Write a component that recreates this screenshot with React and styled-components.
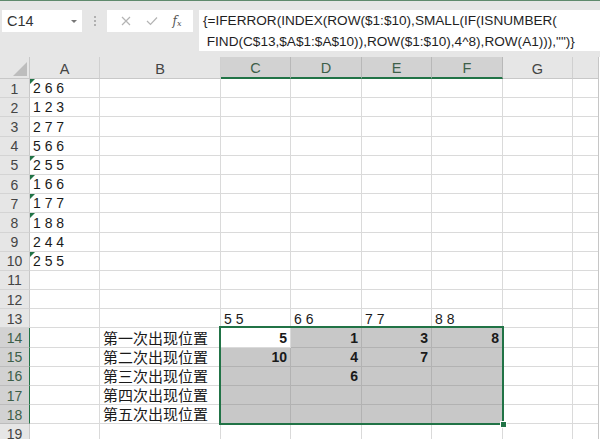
import React from 'react';
import styled, { createGlobalStyle } from 'styled-components';

const Global = createGlobalStyle`
  html, body { margin: 0; padding: 0; background: #fff; }
  body { width: 600px; height: 439px; overflow: hidden; font-family: "Liberation Sans", Arial, sans-serif; }
`;

const Frame = styled.div`
  width: 600px;
  height: 439px;
  display: flex;
  flex-direction: column;
  overflow: hidden;
`;

const FormulaArea = styled.div`
  height: 57px;
  box-sizing: border-box;
  background: #e6e6e6;
  border-top: 1px solid #5f8a6d;
  display: flex;
  align-items: flex-start;
  padding: 9px 0 0 2px;
  flex-shrink: 0;
`;

const NameBox = styled.div`
  width: 80px;
  height: 22px;
  box-sizing: border-box;
  background: #fff;
  display: flex;
  align-items: center;
  justify-content: space-between;
  padding: 0 5px 0 5px;
  font-size: 14.5px;
  color: #333;
`;

const Caret = styled.span`
  width: 0;
  height: 0;
  border-left: 3px solid transparent;
  border-right: 3px solid transparent;
  border-top: 3px solid #777;
`;

const Dots = styled.div`
  width: 25px;
  height: 22px;
  display: flex;
  flex-direction: column;
  align-items: center;
  justify-content: center;
  gap: 2px;
  & > i { width: 2px; height: 2px; background: #b0b0b0; display: block; }
`;

const FxBox = styled.div`
  width: 86px;
  height: 22px;
  box-sizing: border-box;
  background: #fff;
  display: flex;
  align-items: center;
  justify-content: space-around;
  padding: 0 4px 0 6px;
  color: #a8a8a8;
`;

const FxLabel = styled.span`
  font-family: "DejaVu Serif", "Liberation Serif", serif;
  font-style: italic;
  font-size: 12px;
  color: #555;
  & sub { font-size: 8px; vertical-align: -1px; }
`;

const FormulaBox = styled.div`
  margin-left: 6px;
  flex: 1;
  height: 41px;
  background: #fff;
  padding: 0 0 0 4px;
  font-size: 13.6px;
  line-height: 21px;
  color: #1f1f1f;
  white-space: pre;
  overflow: hidden;
  & > span { display: block; }
`;

const Sheet = styled.div`
  flex: 1;
  width: 598px;
  display: grid;
  grid-template-columns: 30px 70px 121px 70px 71px 70px 71px 70px 70px;
  grid-template-rows: 22px repeat(19, 19.2px);
  overflow: hidden;
  border-right: 1px solid #c6c6c6;
`;

const Corner = styled.div`
  grid-row: 1;
  grid-column: 1;
  background: #e6e6e6;
  border-right: 1px solid #c8c8c8;
  border-bottom: 1px solid #c8c8c8;
  display: flex;
  align-items: flex-end;
  justify-content: flex-end;
  padding: 0 2px 2px 0;
`;

const ColHeader = styled.div`
  grid-row: 1;
  grid-column: ${p => p.$col};
  background: ${p => (p.$sel ? '#d2d2d2' : '#e6e6e6')};
  border-right: 1px solid ${p => (p.$sel ? '#b8b8b8' : '#d0d0d0')};
  border-bottom: ${p => (p.$sel ? '2px solid #217346' : '1px solid #c8c8c8')};
  color: ${p => (p.$sel ? '#3d5f49' : '#444')};
  font-size: 14.5px;
  display: flex;
  align-items: center;
  justify-content: center;
  padding-top: 2px;
`;

const RowHeader = styled.div`
  grid-row: ${p => p.$row};
  grid-column: 1;
  background: ${p => (p.$sel ? '#d2d2d2' : '#e6e6e6')};
  border-right: ${p => (p.$sel ? '1px solid #217346' : '1px solid #c8c8c8')};
  border-bottom: 1px solid ${p => (p.$sel ? '#bcbcbc' : '#d4d4d4')};
  color: ${p => (p.$sel ? '#3d5f49' : '#444')};
  font-size: 14px;
  display: flex;
  align-items: center;
  justify-content: center;
  padding-top: 1px;
`;

const Cell = styled.div`
  grid-row: ${p => p.$row};
  grid-column: ${p => p.$col};
  position: relative;
  background: ${p => (p.$fill ? '#c8c8c8' : '#fff')};
  border-right: 1px solid ${p => (p.$fill ? '#b2b2b2' : '#dadada')};
  border-bottom: 1px solid ${p => (p.$fill ? '#b2b2b2' : '#dadada')};
  display: flex;
  align-items: flex-end;
  justify-content: ${p => (p.$right ? 'flex-end' : 'flex-start')};
  padding: 0 3px 0 3px;
  font-size: ${p => (p.$cjk ? '15px' : '14px')};
  font-family: ${p => (p.$cjk ? '"Noto Sans CJK SC", "Liberation Sans", sans-serif' : '"Liberation Sans", Arial, sans-serif')};
  font-weight: ${p => (p.$bold ? 700 : 400)};
  line-height: ${p => (p.$low ? '16px' : '18px')};
  color: #1a1a1a;
  white-space: pre;
  min-width: 0;
  &::before {
    content: '';
    display: ${p => (p.$tri ? 'block' : 'none')};
    position: absolute;
    left: 0;
    top: 0;
    border-top: 5px solid #217346;
    border-right: 5px solid transparent;
  }
`;

const Selection = styled.div`
  grid-column: 4 / 8;
  grid-row: 15 / 20;
  margin: -2px -1px -1px -2px;
  border: 2px solid #217346;
  position: relative;
  pointer-events: none;
  &::after {
    content: '';
    position: absolute;
    right: -5px;
    bottom: -5px;
    width: 5px;
    height: 5px;
    background: #217346;
    border: 1px solid #fff;
  }
`;

const cols = ['A', 'B', 'C', 'D', 'E', 'F', 'G', 'H'];
const selCols = ['C', 'D', 'E', 'F'];

const data = {
  A1: { v: '2 6 6', tri: true },
  A2: { v: '1 2 3' },
  A3: { v: '2 7 7' },
  A4: { v: '5 6 6' },
  A5: { v: '2 5 5', tri: true },
  A6: { v: '1 6 6', tri: true },
  A7: { v: '1 7 7', tri: true },
  A8: { v: '1 8 8', tri: true },
  A9: { v: '2 4 4' },
  A10: { v: '2 5 5', tri: true },
  C13: { v: '5 5', low: true },
  D13: { v: '6 6', low: true },
  E13: { v: '7 7', low: true },
  F13: { v: '8 8', low: true },
  B14: { v: '第一次出现位置', cjk: true },
  B15: { v: '第二次出现位置', cjk: true },
  B16: { v: '第三次出现位置', cjk: true },
  B17: { v: '第四次出现位置', cjk: true },
  B18: { v: '第五次出现位置', cjk: true },
  C14: { v: '5', num: true },
  D14: { v: '1', num: true },
  E14: { v: '3', num: true },
  F14: { v: '8', num: true },
  C15: { v: '10', num: true },
  D15: { v: '4', num: true },
  E15: { v: '7', num: true },
  D16: { v: '6', num: true },
};

export default function App() {
  const rows = Array.from({ length: 19 }, (_, i) => i + 1);
  return (
    <Frame>
      <Global />
      <FormulaArea>
        <NameBox>
          <span>C14</span>
          <Caret />
        </NameBox>
        <Dots><i /><i /><i /></Dots>
        <FxBox>
          <svg width="10" height="10" viewBox="0 0 10 10">
            <path d="M1 1 L9 9 M9 1 L1 9" stroke="#b4b4b4" strokeWidth="1.2" fill="none" />
          </svg>
          <svg width="12" height="10" viewBox="0 0 12 10">
            <path d="M1 5 L4.5 8.5 L11 1.5" stroke="#b4b4b4" strokeWidth="1.2" fill="none" />
          </svg>
          <FxLabel>f<sub>x</sub></FxLabel>
        </FxBox>
        <FormulaBox>
          <span>{'{=IFERROR(INDEX(ROW($1:$10),SMALL(IF(ISNUMBER('}</span>
          <span>{' FIND(C$13,$A$1:$A$10)),ROW($1:$10),4^8),ROW(A1))),"")}'}</span>
        </FormulaBox>
      </FormulaArea>
      <Sheet>
        <Corner>
          <svg width="14" height="14" viewBox="0 0 14 14">
            <path d="M14 0 L14 14 L0 14 Z" fill="#bdbdbd" />
          </svg>
        </Corner>
        {cols.map((c, ci) => (
          <ColHeader key={c} $col={ci + 2} $sel={selCols.includes(c)}>
            {c === 'H' ? '' : c}
          </ColHeader>
        ))}
        {rows.map(r => (
          <React.Fragment key={r}>
            <RowHeader $row={r + 1} $sel={r >= 14 && r <= 18}>{r}</RowHeader>
            {cols.map((c, ci) => {
              const id = c + r;
              const d = data[id] || {};
              const inSel = selCols.includes(c) && r >= 14 && r <= 18;
              const fill = inSel && id !== 'C14';
              return (
                <Cell
                  key={id}
                  $row={r + 1}
                  $col={ci + 2}
                  $fill={fill}
                  $right={d.num}
                  $bold={d.num}
                  $cjk={d.cjk}
                  $tri={d.tri}
                  $low={d.low}
                >
                  {d.v || ''}
                </Cell>
              );
            })}
          </React.Fragment>
        ))}
        <Selection />
      </Sheet>
    </Frame>
  );
}
